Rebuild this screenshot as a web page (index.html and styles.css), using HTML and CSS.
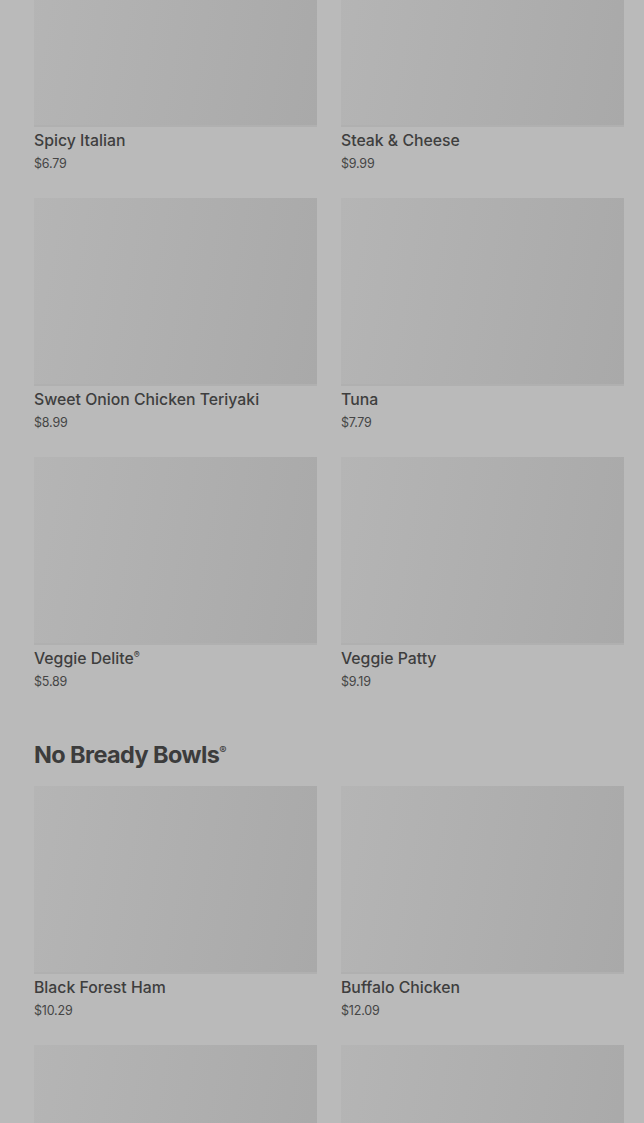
FILE: index.html
```html
<!DOCTYPE html>
<html lang="en">
<head>
  <meta charset="UTF-8">
  <meta name="viewport" content="width=device-width, initial-scale=1.0">
  <title>Menu - Sandwiches &amp; Bowls</title>
  <link rel="stylesheet" href="styles.css">
</head>
<body>
  <div class="menu">
    <section class="menu-section first">
      <div class="grid">
        <div class="item">
          <div class="photo"></div>
          <div class="name">Spicy Italian</div>
          <div class="price">$6.79</div>
        </div>
        <div class="item">
          <div class="photo"></div>
          <div class="name">Steak &amp; Cheese</div>
          <div class="price">$9.99</div>
        </div>
        <div class="item">
          <div class="photo"></div>
          <div class="name">Sweet Onion Chicken Teriyaki</div>
          <div class="price">$8.99</div>
        </div>
        <div class="item">
          <div class="photo"></div>
          <div class="name">Tuna</div>
          <div class="price">$7.79</div>
        </div>
        <div class="item">
          <div class="photo"></div>
          <div class="name">Veggie Delite<sup>®</sup></div>
          <div class="price">$5.89</div>
        </div>
        <div class="item">
          <div class="photo"></div>
          <div class="name">Veggie Patty</div>
          <div class="price">$9.19</div>
        </div>
      </div>
    </section>

    <section class="menu-section">
      <h2 class="section-title">No Bready Bowls<sup>®</sup></h2>
      <div class="grid">
        <div class="item">
          <div class="photo"></div>
          <div class="name">Black Forest Ham</div>
          <div class="price">$10.29</div>
        </div>
        <div class="item">
          <div class="photo"></div>
          <div class="name">Buffalo Chicken</div>
          <div class="price">$12.09</div>
        </div>
        <!-- next row only peeks in at the bottom -->
        <div class="item">
          <div class="photo"></div>
        </div>
        <div class="item">
          <div class="photo"></div>
        </div>
      </div>
    </section>
  </div>
</body>
</html>
```

FILE: styles.css
```css
html, body {
  margin: 0;
  padding: 0;
  height: 100%;
  overflow: hidden;
  background: #bababa;
  font-family: "Inter", "Roboto", sans-serif;
  color: #404040;
}

/* page is scrolled a little, so the first row of photos is cut off */
.menu {
  padding: 0 20px 0 34px;
  margin-top: -61px;
}

.menu-section.first {
  margin-bottom: 50px;
}

.section-title {
  margin: 0 0 17px;
  font-size: 23.5px;
  line-height: 28px;
  font-weight: 700;
  letter-spacing: -0.6px;
  color: #3c3c3c;
}

.section-title sup {
  font-size: 11px;
  font-weight: 600;
  vertical-align: 9px;
  line-height: 0;
  letter-spacing: 0;
}

.grid {
  display: grid;
  grid-template-columns: 1fr 1fr;
  column-gap: 24px;
  row-gap: 25px;
}

.photo {
  height: 188px;
  background: linear-gradient(100deg, #b5b5b5 0%, #afafaf 50%, #a9a9a9 100%);
  box-shadow: inset 0 -2px 0 #b0b0b0;
}

.name {
  margin-top: 4px;
  font-size: 15.8px;
  line-height: 20px;
  font-weight: 500;
  color: #3e3e3e;
}

.name sup {
  font-size: 9px;
  vertical-align: 6px;
  line-height: 0;
}

.price {
  margin-top: 4px;
  font-size: 12.5px;
  line-height: 18px;
  color: #454545;
  letter-spacing: -0.2px;
}
```
